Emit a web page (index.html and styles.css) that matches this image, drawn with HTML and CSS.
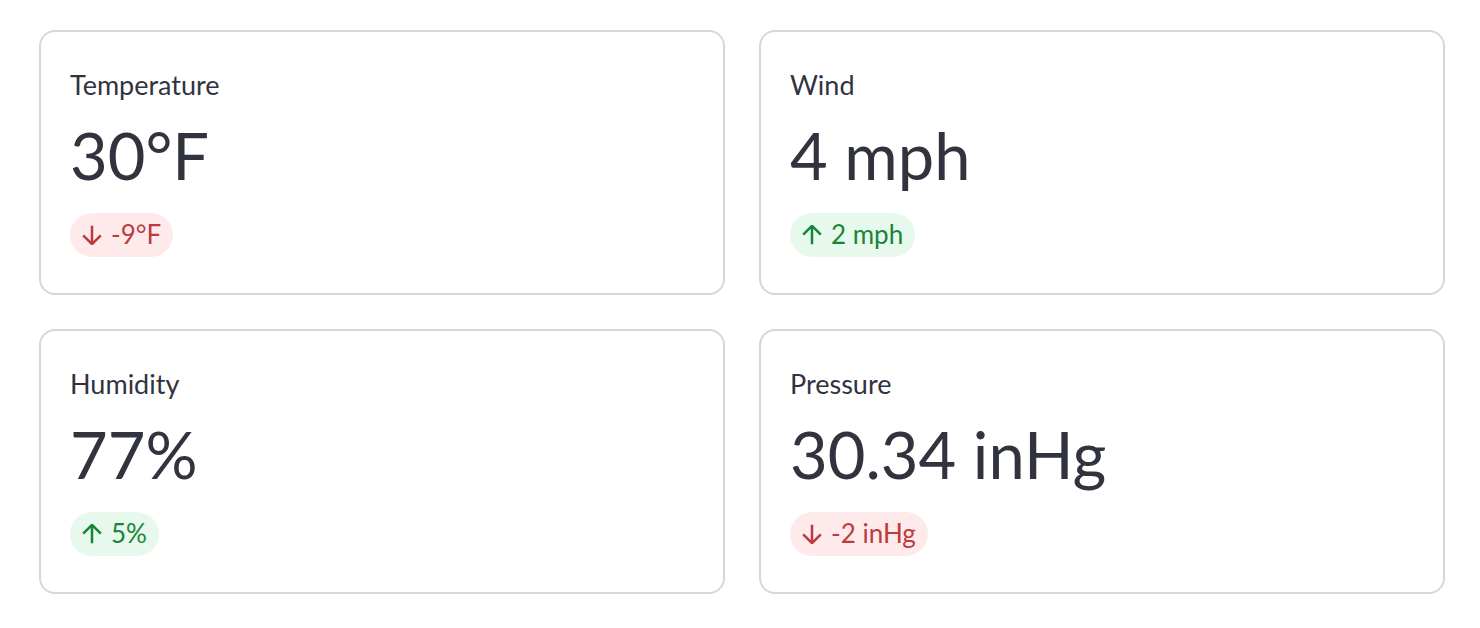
FILE: index.html
```html
<!DOCTYPE html>
<html lang="en">
<head>
<meta charset="utf-8">
<title>Weather metrics</title>
<link rel="stylesheet" href="styles.css">
</head>
<body>
<main class="grid">
  <section class="card">
    <div class="label">Temperature</div>
    <div class="value">30°F</div>
    <div class="delta-row">
      <span class="delta delta-down">
        <svg class="arrow" viewBox="0 0 20 20" aria-hidden="true"><path d="M10 0.8V19M1.2 10.4L10 19.2L18.8 10.4"/></svg>
        <span>-9°F</span>
      </span>
    </div>
  </section>
  <section class="card">
    <div class="label">Wind</div>
    <div class="value">4 mph</div>
    <div class="delta-row">
      <span class="delta delta-up">
        <svg class="arrow" viewBox="0 0 20 20" aria-hidden="true"><path d="M10 19.2V1M1.2 9.6L10 0.8L18.8 9.6"/></svg>
        <span>2 mph</span>
      </span>
    </div>
  </section>
  <section class="card">
    <div class="label">Humidity</div>
    <div class="value">77%</div>
    <div class="delta-row">
      <span class="delta delta-up">
        <svg class="arrow" viewBox="0 0 20 20" aria-hidden="true"><path d="M10 19.2V1M1.2 9.6L10 0.8L18.8 9.6"/></svg>
        <span>5%</span>
      </span>
    </div>
  </section>
  <section class="card">
    <div class="label">Pressure</div>
    <div class="value">30.34 inHg</div>
    <div class="delta-row">
      <span class="delta delta-down">
        <svg class="arrow" viewBox="0 0 20 20" aria-hidden="true"><path d="M10 0.8V19M1.2 10.4L10 19.2L18.8 10.4"/></svg>
        <span>-2 inHg</span>
      </span>
    </div>
  </section>
</main>
</body>
</html>
```
FILE: styles.css
```css
html, body {
  margin: 0;
  padding: 0;
  background: #ffffff;
}

body {
  font-family: Lato, "Noto Sans", "Liberation Sans", sans-serif;
  color: #31333f;
}

.grid {
  display: grid;
  grid-template-columns: 1fr 1fr;
  column-gap: 34px;
  row-gap: 34px;
  padding: 30px 35px 0 39px;
}

.card {
  border: 2px solid #d7d7da;
  border-radius: 16px;
  padding: 35px 29px 36px 29px;
  display: flex;
  flex-direction: column;
  align-items: flex-start;
}

.label {
  font-size: 27px;
  line-height: 36px;
  color: #31333f;
}

.value {
  margin-top: 12px;
  font-size: 65px;
  line-height: 80px;
  color: #31333f;
}

.delta-row {
  margin-top: 18px;
  display: flex;
}

.delta {
  display: inline-flex;
  align-items: center;
  gap: 9px;
  height: 44px;
  box-sizing: border-box;
  padding: 3px 12px 5px 12px;
  border-radius: 22px;
  font-size: 26px;
  line-height: 36px;
}

.arrow {
  width: 20px;
  height: 20px;
  fill: none;
  stroke: currentColor;
  stroke-width: 2.5;
  stroke-linecap: butt;
  stroke-linejoin: miter;
  margin-top: 2px;
}

.delta-down {
  background: #feeaea;
  color: #bd3b40;
}

.delta-up {
  background: #e7f8ec;
  color: #17853a;
}
```
